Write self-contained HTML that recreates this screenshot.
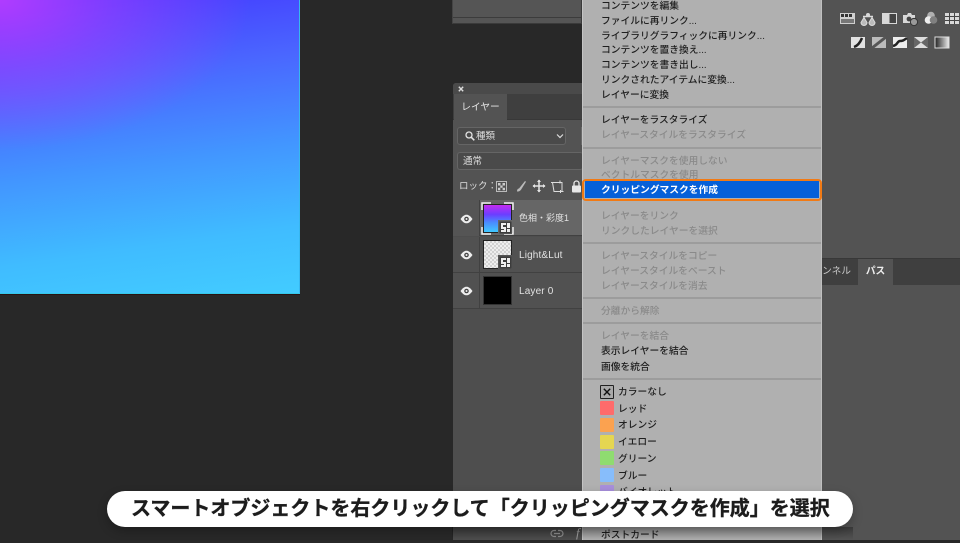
<!DOCTYPE html>
<html lang="ja">
<head>
<meta charset="utf-8">
<title>クリッピングマスクを作成</title>
<style>
html,body{margin:0;padding:0;background:#282828;}
body{position:relative;width:960px;height:540px;overflow:hidden;font-family:"Liberation Sans","Noto Sans CJK JP",sans-serif;}
div,span,svg{position:absolute;display:block;box-sizing:border-box;}
.art{left:0;top:0;width:300px;height:294px;background:
 radial-gradient(ellipse 250px 150px at 0% 0%,rgba(176,60,255,1) 0%,rgba(176,60,255,.5) 45%,rgba(176,60,255,0) 100%),
 linear-gradient(172deg,#4436ff 0%,#4a66ff 28%,#4296ff 55%,#40bcff 80%,#42ccff 100%);
 border-right:1px solid #38b8f0;border-bottom:1px solid #35c8e8;box-shadow:0 1px 0 #2a1414;}
.top{left:452px;top:0;width:130px;height:24px;background:#555;border:1px solid #3a3a3a;border-top:0;border-left:1px solid #444;}
.top i{position:absolute;left:0;right:0;top:17px;height:1px;background:#3c3c3c;display:block;}
.right{left:822px;top:0;width:138px;height:540px;background:#535353;}
.tabs{left:822px;top:258px;width:138px;height:27px;background:#3f3f3f;border-top:1px solid #383838;}
.layers{left:453px;top:83px;width:130px;height:457px;background:#4e4e4e;border-radius:3px 0 0 0;}
.closebar{left:453px;top:83px;width:130px;height:11px;background:#4a4a4a;border-radius:3px 0 0 0;}
.tabbar{left:453px;top:94px;width:130px;height:26px;background:#3f3f3f;border-bottom:1px solid #383838;}
.tab{left:454px;top:94px;width:53px;height:26px;background:#535353;color:#e6e6e6;font-size:9.7px;line-height:27px;text-align:center;}
.paneltop{left:453px;top:120px;width:130px;height:80px;background:#535353;}
.box{background:#4a4a4a;border:1px solid #656565;border-radius:3px;color:#ddd;font-size:9.5px;}
.row{left:453px;width:129px;height:36px;background:#515151;border-bottom:1px solid #414141;}
.eyecol{left:453px;width:27px;height:36px;border-right:1px solid #414141;}
.lname{left:519px;color:#e2e2e2;font-size:10px;line-height:12px;white-space:nowrap;letter-spacing:.15px;}
.thumb{left:483px;width:29px;height:29px;border:1px solid #1e1e1e;}
.so{width:14px;height:14px;background:#3a3a3a;border:1px solid #ddd;}
.menu{left:582px;top:0;width:240px;height:540px;background:#b0b0b0;border-left:1px solid #c4c4c4;border-right:1px solid #c0c0c0;}
.m{left:601px;font-size:9.75px;line-height:14px;white-space:nowrap;color:#1f1f1f;font-weight:500;transform:translateY(2px);}
.d{color:#8a8a8a;}
.sep{left:583px;width:238px;height:2px;background:#9c9c9c;}
.hl{left:585px;top:181px;width:234px;height:17px;background:#0660d8;}
.hlb{left:582px;top:178.5px;width:240px;height:22px;border:2.5px solid #f27a14;border-radius:4px;}
.hlt{left:601px;top:183.5px;font-size:9.75px;line-height:14px;color:#fff;font-weight:700;white-space:nowrap;}
.sw{left:600px;width:14px;height:14px;border-radius:1px;}
.c{left:618px;font-size:9.75px;line-height:14px;color:#1f1f1f;white-space:nowrap;font-weight:500;transform:translateY(2px);}
.shade{left:452px;top:527px;width:401px;height:13px;background:linear-gradient(180deg,rgba(0,0,0,.3),rgba(0,0,0,0));}
.pill{left:107px;top:491px;width:746px;height:36px;background:#fff;border-radius:18px;box-shadow:0 4px 10px rgba(0,0,0,.25);}
.cap{left:131px;top:491px;width:710px;font-size:20px;line-height:36px;font-weight:700;color:#1c1c1c;white-space:nowrap;-webkit-text-stroke:.35px #1c1c1c;}
.soft{filter:blur(.35px);}
</style>
</head>
<body>
<div class="art"></div>

<div class="top"><i></i></div>
<div class="right"></div>
<div class="tabs"></div>
<div style="left:858px;top:259px;width:35px;height:26px;background:#535353;"></div>
<div style="left:822px;top:260px;color:#c8c8c8;font-size:9.7px;line-height:24px;width:36px;text-align:right;padding-right:7px;white-space:nowrap;overflow:hidden;direction:rtl;">ンネル</div>
<div style="left:858px;top:260px;width:35px;color:#eee;font-size:9.7px;line-height:24px;text-align:center;font-weight:700;">パス</div>

<!-- adjustment icons -->
<svg class="soft" style="left:838px;top:10px;" width="122" height="42" viewBox="0 0 122 42" fill="none">
 <g fill="#d8d8d8">
  <rect x="2" y="3" width="15" height="11" fill="#cfcfcf"/>
  <path d="M3 4h3v3H3zM7 4h3v3H7zM11 4h3v3h-3z" fill="#333"/>
  <rect x="3" y="9" width="13" height="4" fill="#777"/>
  <path d="M23 12.500a3 3 0 0 0 6 0l-3-5zM31 12.500a3 3 0 0 0 6 0l-3-5z" fill="#bbb" stroke="#ddd"/>
  <path d="M25 6.500h10" stroke="#dcdcdc" stroke-width="1.500"/>
  <circle cx="30" cy="5" r="2"/>
  <rect x="44" y="3" width="15" height="11"/>
  <rect x="51.500" y="4" width="6.500" height="9" fill="#444"/>
  <path d="M65 5h4l1-2h3l1 2h3v8H65z"/>
  <circle cx="71" cy="9" r="2.400" fill="#444"/>
  <circle cx="76" cy="12" r="3.600" fill="#999" stroke="#333"/>
  <circle cx="93" cy="5.500" r="3.800" fill="#b0b0b0"/>
  <circle cx="90.500" cy="10" r="3.800" fill="#eee"/>
  <circle cx="95.500" cy="10" r="3.800" fill="#808080"/>
  <rect x="107" y="3" width="14" height="11"/>
  <path d="M107 6.500h14M107 10.500h14M111.500 3v11M116.500 3v11" stroke="#444"/>
 </g>
 <g>
  <rect x="13" y="27" width="14" height="11" fill="#e2e2e2"/>
  <path d="M16 37c3-1 6-4 8-9" stroke="#222" stroke-width="2.500"/>
  <rect x="34" y="27" width="14" height="11" fill="#bbb"/>
  <path d="M34 38l14-11" stroke="#555" stroke-width="3"/>
  <rect x="55" y="27" width="14" height="11" fill="#eee"/>
  <path d="M55 36c5-1 4-5 7-5s4-1 7-3" stroke="#222" stroke-width="2.500"/>
  <rect x="76" y="27" width="14" height="11" fill="#ddd"/>
  <path d="M76 27l7 5.500L90 27v11l-7-5.500L76 38z" fill="#666"/>
  <rect x="97" y="27" width="14" height="11" fill="url(#g1)" stroke="#ddd"/>
 </g>
 <defs><linearGradient id="g1"><stop offset="0" stop-color="#222"/><stop offset="1" stop-color="#eee"/></linearGradient></defs>
</svg>

<!-- layers panel -->
<div class="layers"></div>
<div class="closebar"></div>
<svg style="left:458px;top:86px;" width="6" height="6" viewBox="0 0 6 6"><path d="M.8.8l4.400 4.400M5.200.8L.8 5.200" stroke="#ddd" stroke-width="1.400"/></svg>
<div class="tabbar"></div>
<div class="paneltop"></div>
<div class="tab">レイヤー</div>

<div class="box" style="left:457px;top:127px;width:109px;height:18px;"></div>
<svg style="left:464px;top:130px;" width="12" height="12" viewBox="0 0 12 12" fill="none"><circle cx="5" cy="5" r="3" stroke="#e4e4e4" stroke-width="1.300"/><path d="M7.300 7.300l3 3" stroke="#e4e4e4" stroke-width="1.500"/></svg>
<div style="left:476px;top:130px;color:#ddd;font-size:9.500px;line-height:14px;">種類</div>
<svg style="left:556px;top:133px;" width="8" height="6" viewBox="0 0 8 6" fill="none"><path d="M1 1.500l3 3 3-3" stroke="#ddd" stroke-width="1.200"/></svg>
<div style="left:581px;top:127px;width:2px;height:18px;background:#6a6a6a;"></div>
<div class="box" style="left:457px;top:152px;width:126px;height:18px;border-right:0;"></div>
<div style="left:463px;top:155px;color:#ddd;font-size:9.500px;line-height:14px;">通常</div>

<div style="left:459px;top:180px;color:#ddd;font-size:9.500px;line-height:14px;white-space:nowrap;">ロック：</div>
<svg style="left:496px;top:179px;" width="90" height="15" viewBox="0 0 90 15" fill="none">
 <rect x=".5" y="2.500" width="10" height="10" stroke="#bbb"/>
 <path d="M2 4h2.500v2.500H2zM6.500 4H9v2.500H6.500zM4.300 6.500h2.300v2.300H4.300zM2 8.800h2.300v2.500H2zM6.600 8.800H9v2.500H6.600z" fill="#ccc"/>
 <path d="M21 12.500c0-2 1-3 2-3l6-7.500 1 .7-5 8c-1 1.500-2.500 1.800-4 1.800z" fill="#bbb"/>
 <path d="M43 1v12M37 7h12" stroke="#e4e4e4" stroke-width="1.500"/>
 <path d="M43 .5l-2 2.500h4zM43 13.500l-2-2.500h4zM36.500 7l2.500-2v4zM49.500 7l-2.500-2v4z" fill="#e4e4e4"/>
 <path d="M56.500 3.500h9.500v9H58zM55 3.500h3M64 1.500v3M64.500 11v3M63.500 12.500h4" stroke="#ddd"/>
 <rect x="76" y="6.500" width="9" height="7" rx="1" fill="#e8e8e8"/>
 <path d="M78 7V4.500a2.500 2.500 0 0 1 5 0V7" stroke="#e8e8e8" stroke-width="1.300"/>
</svg>

<!-- rows -->
<div class="row" style="top:200px;background:#666;"></div>
<div class="row" style="top:237px;"></div>
<div class="row" style="top:273px;"></div>
<div class="eyecol" style="top:200px;background:#555;"></div>
<div class="eyecol" style="top:237px;"></div>
<div class="eyecol" style="top:273px;"></div>

<svg style="left:460px;top:214px;" width="13" height="10" viewBox="0 0 13 10"><path d="M.5 5C3 1.500 4.800.7 6.500.7S10 1.500 12.500 5C10 8.500 8.200 9.300 6.500 9.300S3 8.500.5 5z" fill="#eee"/><circle cx="6.500" cy="5" r="2.300" fill="#444"/><circle cx="6.500" cy="5" r="1" fill="#eee"/></svg>
<svg style="left:460px;top:250px;" width="13" height="10" viewBox="0 0 13 10"><path d="M.5 5C3 1.500 4.800.7 6.500.7S10 1.500 12.500 5C10 8.500 8.200 9.300 6.500 9.300S3 8.500.5 5z" fill="#eee"/><circle cx="6.500" cy="5" r="2.300" fill="#444"/><circle cx="6.500" cy="5" r="1" fill="#eee"/></svg>
<svg style="left:460px;top:286px;" width="13" height="10" viewBox="0 0 13 10"><path d="M.5 5C3 1.500 4.800.7 6.500.7S10 1.500 12.500 5C10 8.500 8.200 9.300 6.500 9.300S3 8.500.5 5z" fill="#eee"/><circle cx="6.500" cy="5" r="2.300" fill="#444"/><circle cx="6.500" cy="5" r="1" fill="#eee"/></svg>

<div class="thumb" style="top:204px;background:linear-gradient(180deg,#c52cf2 0%,#6b3dff 35%,#4a8cff 65%,#40c8ff 100%);border:1px solid #222;"></div>
<svg style="left:481px;top:202px;" width="33" height="33" viewBox="0 0 33 33" fill="none"><path d="M1 8V1h9M23 1h9v7M32 25v7h-9M10 32H1v-7" stroke="#f0f0f0" stroke-width="1.500"/></svg>
<div class="so" style="left:498px;top:220px;border:0;background:#666;"></div>
<svg style="left:499px;top:221px;" width="13" height="13" viewBox="0 0 13 13"><rect x=".5" y=".5" width="12" height="12" fill="#3c3c3c"/><path d="M2 2h5v2H4v2h3v5H2V9h3V8H2zM8 2h3v5H8zM8 8h3v3H8z" fill="#eee"/></svg>

<div class="thumb" style="top:240px;border-color:#222;background-color:#eeeeee;background-image:linear-gradient(45deg,#d2d2d2 25%,transparent 25%,transparent 75%,#d2d2d2 75%),linear-gradient(45deg,#d2d2d2 25%,transparent 25%,transparent 75%,#d2d2d2 75%);background-size:4px 4px;background-position:0 0,2px 2px;"></div>
<div class="so" style="left:498px;top:255px;border:0;background:#555;"></div>
<svg style="left:499px;top:256px;" width="13" height="13" viewBox="0 0 13 13"><rect x=".5" y=".5" width="12" height="12" fill="#3c3c3c"/><path d="M2 2h5v2H4v2h3v5H2V9h3V8H2zM8 2h3v5H8zM8 8h3v3H8z" fill="#eee"/></svg>

<div class="thumb" style="top:276px;background:#000;border-color:#333;"></div>

<div class="lname" style="top:212px;font-size:9px;letter-spacing:0;">色相・彩度1</div>
<div class="lname" style="top:250px;">Light&amp;Lut</div>
<div class="lname" style="top:286px;">Layer 0</div>

<!-- context menu -->
<div class="menu"></div>
<div class="m" style="top:-2px;">コンテンツを編集</div>
<div class="m" style="top:13px;">ファイルに再リンク...</div>
<div class="m" style="top:28px;">ライブラリグラフィックに再リンク...</div>
<div class="m" style="top:42px;">コンテンツを置き換え...</div>
<div class="m" style="top:57px;">コンテンツを書き出し...</div>
<div class="m" style="top:72px;">リンクされたアイテムに変換...</div>
<div class="m" style="top:87px;">レイヤーに変換</div>
<div class="sep" style="top:106px;"></div>
<div class="m" style="top:112px;">レイヤーをラスタライズ</div>
<div class="m d" style="top:127px;">レイヤースタイルをラスタライズ</div>
<div class="sep" style="top:147px;"></div>
<div class="m d" style="top:153px;">レイヤーマスクを使用しない</div>
<div class="m d" style="top:167px;">ベクトルマスクを使用</div>
<div class="hl"></div>
<div class="hlb"></div>
<div class="hlt">クリッピングマスクを作成</div>
<div class="m d" style="top:208px;">レイヤーをリンク</div>
<div class="m d" style="top:223px;">リンクしたレイヤーを選択</div>
<div class="sep" style="top:242px;"></div>
<div class="m d" style="top:248px;">レイヤースタイルをコピー</div>
<div class="m d" style="top:263px;">レイヤースタイルをペースト</div>
<div class="m d" style="top:278px;">レイヤースタイルを消去</div>
<div class="sep" style="top:297px;"></div>
<div class="m d" style="top:303px;">分離から解除</div>
<div class="sep" style="top:322px;"></div>
<div class="m d" style="top:328px;">レイヤーを結合</div>
<div class="m" style="top:343px;">表示レイヤーを結合</div>
<div class="m" style="top:359px;">画像を統合</div>
<div class="sep" style="top:378px;"></div>

<div class="sw" style="top:385px;background:#aaa;border:1.500px solid #222;"></div>
<svg style="left:603px;top:388px;" width="8" height="8" viewBox="0 0 8 8"><path d="M.8.8l6.400 6.400M7.200.8L.8 7.200" stroke="#111" stroke-width="1.400"/></svg>
<div class="c" style="top:384px;">カラーなし</div>
<div class="sw" style="top:401px;background:#ff6b6b;"></div><div class="c" style="top:401px;">レッド</div>
<div class="sw" style="top:418px;background:#fba250;"></div><div class="c" style="top:417px;">オレンジ</div>
<div class="sw" style="top:435px;background:#e5d651;"></div><div class="c" style="top:434px;">イエロー</div>
<div class="sw" style="top:451px;background:#8fdc70;"></div><div class="c" style="top:451px;">グリーン</div>
<div class="sw" style="top:468px;background:#87bdfb;"></div><div class="c" style="top:468px;">ブルー</div>
<div class="sw" style="top:485px;background:#a88fdc;"></div><div class="c" style="top:484px;">バイオレット</div>
<div class="m" style="top:527px;">ポストカード</div>

<div class="shade"></div>
<svg style="left:550px;top:529px;" width="14" height="9" viewBox="0 0 14 9" fill="none"><path d="M6 1.500H4a3 3 0 0 0 0 6h2M8 1.500h2a3 3 0 0 1 0 6H8M4 4.500h6" stroke="#888" stroke-width="1.200"/></svg>
<div style="left:576px;top:525px;color:#999;font-family:'Liberation Serif',serif;font-style:italic;font-size:13px;line-height:15px;">f</div>

<div class="pill"></div>
<div class="cap">スマートオブジェクトを右クリックして「クリッピングマスクを作成」を選択</div>
</body>
</html>
